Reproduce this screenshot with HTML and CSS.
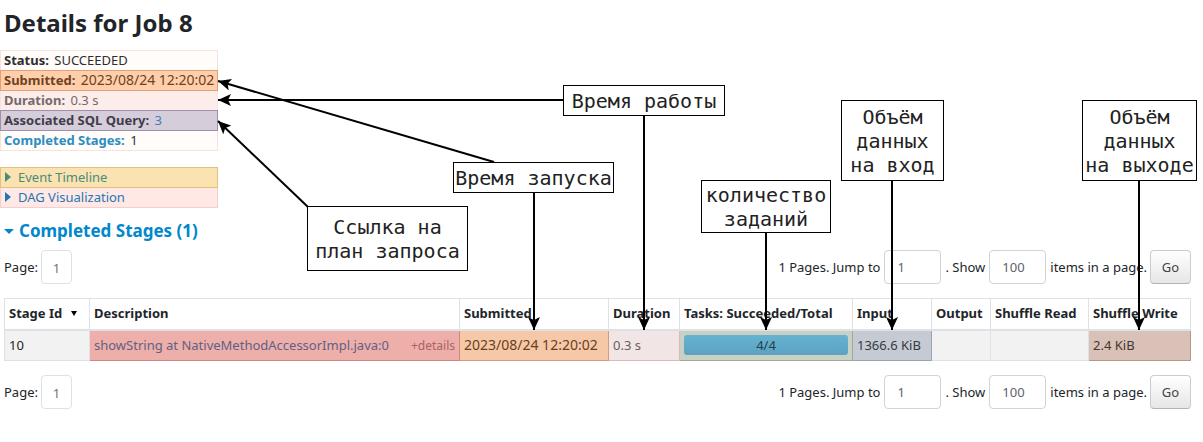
FILE: index.html
```html
<!DOCTYPE html>
<html lang="en">
<head>
<meta charset="utf-8">
<title>Details for Job 8</title>
<link rel="stylesheet" href="styles.css">
</head>
<body>
<main class="page">
  <h1 class="title">Details for Job 8</h1>
  <ul class="summary">
    <li class="row plain"><strong>Status:</strong> SUCCEEDED</li>
    <li class="row submitted"><strong>Submitted:</strong> <span class="date">2023/08/24 12:20:02</span></li>
    <li class="row duration"><strong>Duration:</strong> 0.3 s</li>
    <li class="row query"><strong>Associated SQL Query:</strong> <a href="#query">3</a></li>
    <li class="row plain"><a href="#stages"><strong>Completed Stages:</strong></a> 1</li>
  </ul>
  <div class="toggles">
    <a class="row timeline" href="#timeline"><svg class="caret" viewBox="0 0 6 10"><path d="M0 0L6 5L0 10Z"/></svg>Event Timeline</a>
    <a class="row dag" href="#dag"><svg class="caret" viewBox="0 0 6 10"><path d="M0 0L6 5L0 10Z"/></svg>DAG Visualization</a>
  </div>
  <h2 class="section" id="stages"><a href="#stages"><svg class="caret-down" viewBox="0 0 10 5"><path d="M0 0H10L5 5Z"/></svg>Completed Stages (1)</a></h2>

  <form class="pager">
    <span>Page:</span><a class="page-link" href="#page1">1</a>
    <div class="jump">
      <label for="jump-top">1 Pages. Jump to</label><input class="field" id="jump-top" value="1">
      <label class="show" for="size-top">. Show</label><input class="field" id="size-top" value="100">
      <span class="items">items in a page.</span><button class="go" type="button">Go</button>
    </div>
  </form>

  <table class="stages">
    <colgroup>
      <col class="c-id"><col><col class="c-submitted"><col class="c-duration"><col class="c-tasks"><col class="c-input"><col class="c-output"><col class="c-read"><col class="c-write">
    </colgroup>
    <thead>
      <tr><th>Stage Id <svg class="sort" viewBox="0 0 6 5"><path d="M0 0H6L3 5Z"/></svg></th><th>Description</th><th>Submitted</th><th>Duration</th><th>Tasks: Succeeded/Total</th><th>Input</th><th>Output</th><th>Shuffle Read</th><th>Shuffle Write</th></tr>
    </thead>
    <tbody>
      <tr>
        <td>10</td>
        <td class="t-desc"><div class="desc"><a href="#stage10">showString at NativeMethodAccessorImpl.java:0</a><span class="details">+details</span></div></td>
        <td class="t-submitted"><span class="date">2023/08/24 12:20:02</span></td>
        <td class="t-duration">0.3 s</td>
        <td class="t-tasks"><div class="bar">4/4</div></td>
        <td class="t-input">1366.6 KiB</td>
        <td></td>
        <td></td>
        <td class="t-write">2.4 KiB</td>
      </tr>
    </tbody>
  </table>

  <form class="pager">
    <span>Page:</span><a class="page-link" href="#page1">1</a>
    <div class="jump">
      <label for="jump-bottom">1 Pages. Jump to</label><input class="field" id="jump-bottom" value="1">
      <label class="show" for="size-bottom">. Show</label><input class="field" id="size-bottom" value="100">
      <span class="items">items in a page.</span><button class="go" type="button">Go</button>
    </div>
  </form>

  <svg class="arrows" width="1203" height="442" viewBox="0 0 1203 442" aria-hidden="true">
    <defs>
      <marker id="head" markerUnits="userSpaceOnUse" markerWidth="14" markerHeight="12" refX="13" refY="6" orient="auto"><path d="M13 6L0 0L3 6L0 12Z"/></marker>
    </defs>
    <path d="M494 162L218 81"/>
    <path d="M564 100H218"/>
    <path d="M308 207L218 121"/>
    <path d="M534 192V330"/>
    <path d="M644 115V330"/>
    <path d="M766 232V330"/>
    <path d="M892 180V330"/>
    <path d="M1139 180V330"/>
  </svg>
  <div class="note n-work">Время работы</div>
  <div class="note n-start">Время запуска</div>
  <div class="note n-link">Ссылка на<br>план запроса</div>
  <div class="note n-tasks">количество<br>заданий</div>
  <div class="note n-in">Объём<br>данных<br>на вход</div>
  <div class="note n-out">Объём<br>данных<br>на выходе</div>
</main>
</body>
</html>
```
FILE: styles.css
```css
* { box-sizing: border-box; }
body {
  margin: 0;
  background: #fff;
  color: #212529;
  font: 13px/19px "Noto Sans", "Open Sans", sans-serif;
}
a { color: #0088cc; text-decoration: none; }
.page { position: relative; padding: 8px 12px 0 0; }
.title { margin: 0 0 12px 4px; font-size: 24px; line-height: 30px; font-weight: 700; }

.summary { width: 218px; margin: 0; padding: 0; list-style: none; }
.summary strong { margin-right: 2px; }
.date { font-size: 14px; }
.toggles { width: 218px; margin-top: 16px; }
.row { display: block; height: 21px; padding: 0 3px; border: 1px solid #f5e3e1; white-space: nowrap; line-height: 18px; }
.row + .row { margin-top: -1px; }
.plain { background: #fffcfa; color: #2e2e30; }
.plain a { color: #2b8dc2; }
.submitted { position: relative; background: #ffceab; border-color: #e2a078; color: #6f4222; }
.duration { background: #fcedea; color: #75696a; }
.query { position: relative; background: #d5cdd9; border-color: #9f90aa; color: #423c4b; }
.query a { color: #3d7db8; }
.timeline { position: relative; background: #fae2b1; border-color: #dfc27e; color: #4a8b7e; }
.dag { background: #ffe8e6; border-color: #f5cfcd; color: #2577b0; }
.timeline, .dag { padding-left: 4px; }
.caret { width: 6px; height: 10px; margin-right: 7px; fill: currentColor; }

.section { margin: 11px 0 7px 4px; font-size: 17px; line-height: 24px; }
.section a { display: flex; align-items: center; gap: 5px; }
.caret-down { width: 10px; height: 5px; fill: currentColor; }

.pager { display: flex; align-items: center; height: 34px; margin-left: 4px; white-space: nowrap; }
.page-link {
  width: 31px; height: 34px; margin-left: 3px;
  border: 1px solid #dee2e6; border-radius: 4px;
  color: #6c757d; line-height: 34px; text-align: center;
}
.jump { display: flex; align-items: center; margin-left: auto; }
.field {
  width: 57px; height: 34px; margin-left: 4px; padding: 0 12px;
  border: 1px solid #ced4da; border-radius: 4px;
  background: #fff; color: #5c646c; font: inherit;
}
.show { margin-left: 4px; }
.items { margin: 0 3px 0 4px; }
.go {
  width: 41px; height: 34px; padding: 0;
  border: 1px solid #cccccc; border-bottom-color: #b3b3b3; border-radius: 4px;
  background: linear-gradient(#fff, #e6e6e6); color: #444; font: inherit;
}

.stages { width: calc(100% - 4px); margin: 14px 0 14px 4px; border-collapse: collapse; table-layout: fixed; white-space: nowrap; }
.c-id { width: 85px; }
.c-submitted { width: 149px; }
.c-duration { width: 71px; }
.c-tasks { width: 173px; }
.c-input { width: 79px; }
.c-output { width: 59px; }
.c-read { width: 98px; }
.c-write { width: 102px; }
.stages th, .stages td { height: 31px; padding: 0 4px; border: 1px solid #dee2e6; text-align: left; }
.stages th { border-bottom-width: 2px; }
.stages td { background: #f2f2f2; }
.sort { width: 6px; height: 5px; margin: 0 0 2px 5px; }
.stages .t-desc { background: #eeaea9; border-color: #cf8583; }
.desc { display: flex; justify-content: space-between; align-items: center; }
.desc a { color: #5d6285; }
.details { color: #a66464; font-size: 12px; }
.stages .t-submitted { background: #f6c8a8; border-color: #d49a82; color: #68401f; }
.stages .t-duration { background: #f2e5e5; border-color: #d9bcb9; color: #666062; }
.stages .t-tasks { background: #c9d1c5; border-color: #9fa89d; }
.bar { height: 20px; border-radius: 3px; background: linear-gradient(#65b3d0, #5ba2c2); color: #24404d; line-height: 20px; text-align: center; }
.stages .t-input { background: #c5cad3; border-color: #9ba3ad; color: #343a45; }
.stages .t-write { background: #d9c1b7; border-color: #b6978c; color: #463630; }
.stages th { border-color: #dee2e6; }

/* Callouts laid over the screen */
.arrows { position: absolute; left: 0; top: 0; pointer-events: none; }
.arrows > path { fill: none; stroke: #000; stroke-width: 2; marker-end: url(#head); }
.note {
  position: absolute;
  display: flex; align-items: center; justify-content: center;
  border: 1px solid #000; background: #fff; color: #222;
  font: 20px/24px "DejaVu Sans Mono", "Liberation Mono", monospace;
  text-align: center; white-space: nowrap;
}
.n-work { left: 563px; top: 85px; width: 162px; height: 31px; }
.n-start { left: 453px; top: 162px; width: 161px; height: 31px; }
.n-link { left: 307px; top: 206px; width: 161px; height: 65px; }
.n-tasks { left: 701px; top: 180px; width: 130px; height: 53px; }
.n-in { left: 841px; top: 100px; width: 103px; height: 81px; }
.n-out { left: 1082px; top: 100px; width: 115px; height: 81px; }
```
